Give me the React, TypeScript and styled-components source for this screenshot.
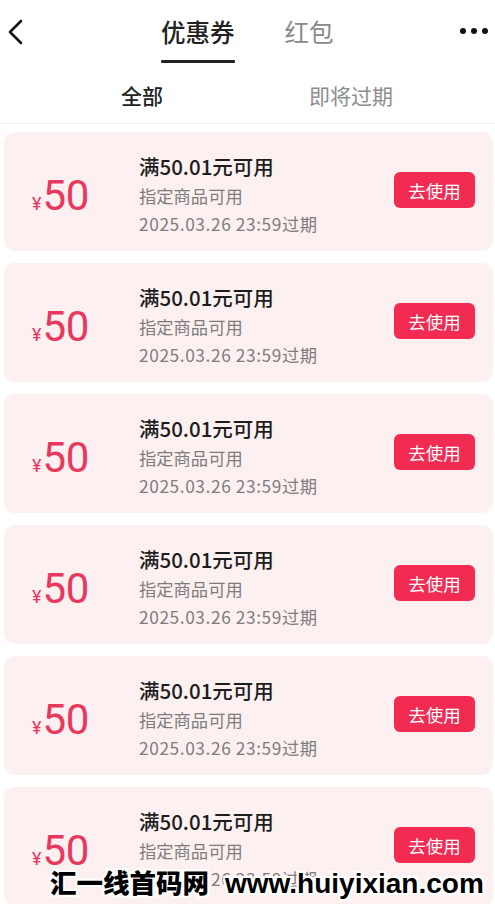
import React from "react";
import styled, { createGlobalStyle } from "styled-components";

const Global = createGlobalStyle`
  html, body { margin: 0; padding: 0; background: #fff; overflow: hidden; }
  body { font-family: "Noto Sans CJK SC", "Noto Sans", sans-serif; }
  * { box-sizing: border-box; }
`;

const Page = styled.div`
  position: relative;
  width: 495px;
  height: 904px;
  overflow: hidden;
  background: #fff;
`;

const TopBar = styled.div`
  height: 64px;
  display: grid;
  grid-template-columns: 60px 1fr 60px;
  align-items: center;
`;

const Back = styled.div`
  display: flex;
  align-items: center;
  padding-left: 6px;
  height: 100%;
  padding-bottom: 0px;
`;

const Tabs = styled.div`
  display: flex;
  justify-content: flex-start;
  padding-left: 101px;
  gap: 50px;
  height: 100%;
`;

const Tab = styled.div<{ $active?: boolean }>`
  position: relative;
  display: flex;
  align-items: center;
  height: 100%;
  padding-bottom: 1px;
  font-size: 24.5px;
  font-weight: ${(p) => (p.$active ? 500 : 400)};
  color: ${(p) => (p.$active ? "#222" : "#8a8a8a")};
  &::after {
    content: "";
    display: ${(p) => (p.$active ? "block" : "none")};
    position: absolute;
    left: 0;
    right: 0;
    bottom: 1px;
    height: 3px;
    border-radius: 1px;
    background: #222;
  }
`;

const More = styled.div`
  display: flex;
  justify-content: flex-end;
  align-items: center;
  gap: 5px;
  padding-right: 7px;
  padding-bottom: 2px;
`;

const Dot = styled.span`
  width: 6px;
  height: 6px;
  border-radius: 50%;
  background: #111;
`;

const SubTabs = styled.div`
  height: 60px;
  display: flex;
  align-items: center;
  padding-left: 121px;
  gap: 146px;
  border-bottom: 1px solid #f0f0f0;
`;

const SubTab = styled.div<{ $active?: boolean }>`
  font-size: 21px;
  padding-top: 2px;
  color: ${(p) => (p.$active ? "#222" : "#8d8d8d")};
  font-weight: ${(p) => (p.$active ? 500 : 400)};
`;

const List = styled.div`
  display: flex;
  flex-direction: column;
  gap: 12px;
  padding: 8px 2px 0 4px;
`;

const Card = styled.div`
  height: 119px;
  border-radius: 11px;
  background: #fdf0f0;
  display: flex;
  align-items: center;
  padding: 0 18px 0 28px;
`;

const Price = styled.div`
  width: 107px;
  display: flex;
  align-items: baseline;
  color: #e8385e;
  font-family: Roboto, "Noto Sans", sans-serif;
  padding-top: 8px;
`;

const Yen = styled.span`
  font-size: 18px;
  margin-right: 1px;
`;

const Amount = styled.span`
  font-size: 42px;
  line-height: 1;
  letter-spacing: -0.3px;
`;

const Info = styled.div`
  flex: 1;
  display: flex;
  flex-direction: column;
  padding-top: 6px;
`;

const Title = styled.div`
  font-size: 20.5px;
  font-weight: 500;
  color: #1d1d1d;
  line-height: 31px;
`;

const Sub = styled.div<{ $wide?: boolean }>`
  font-size: 17.3px;
  color: #7d7d7d;
  line-height: 28px;
  letter-spacing: ${(p) => (p.$wide ? "0.6px" : "0")};
`;

const UseBtn = styled.button`
  width: 81px;
  height: 36px;
  border: none;
  border-radius: 6px;
  background: #f12b52;
  color: #fff;
  font-family: inherit;
  font-size: 17.5px;
  padding: 0;
  margin-bottom: 3px;
`;

const Watermark = styled.div`
  position: absolute;
  left: 50px;
  bottom: 3px;
  display: flex;
  align-items: baseline;
  gap: 16px;
  color: #000;
  white-space: nowrap;
  text-shadow:
    2px 0 0 #fff, -2px 0 0 #fff, 0 2px 0 #fff, 0 -2px 0 #fff,
    2px 2px 0 #fff, -2px -2px 0 #fff, 2px -2px 0 #fff, -2px 2px 0 #fff;
`;

const MarkCn = styled.span`
  font-size: 26.5px;
  font-weight: 900;
`;

const MarkEn = styled.span`
  font-family: "Liberation Sans", Arial, sans-serif;
  font-size: 28px;
  font-weight: 700;
`;

const coupons = Array.from({ length: 6 }, (_, i) => i);

export default function App() {
  return (
    <Page>
      <Global />
      <TopBar>
        <Back>
          <svg width="20" height="26" viewBox="0 0 20 26" fill="none">
            <path d="M15 2 L4 13 L15 24" stroke="#111" strokeWidth="2.6" strokeLinecap="round" strokeLinejoin="round" />
          </svg>
        </Back>
        <Tabs>
          <Tab $active>优惠券</Tab>
          <Tab>红包</Tab>
        </Tabs>
        <More>
          <Dot />
          <Dot />
          <Dot />
        </More>
      </TopBar>
      <SubTabs>
        <SubTab $active>全部</SubTab>
        <SubTab>即将过期</SubTab>
      </SubTabs>
      <List>
        {coupons.map((i) => (
          <Card key={i}>
            <Price>
              <Yen>¥</Yen>
              <Amount>50</Amount>
            </Price>
            <Info>
              <Title>满50.01元可用</Title>
              <Sub>指定商品可用</Sub>
              <Sub $wide>2025.03.26 23:59过期</Sub>
            </Info>
            <UseBtn>去使用</UseBtn>
          </Card>
        ))}
      </List>
      <Watermark>
        <MarkCn>汇一线首码网</MarkCn>
        <MarkEn>www.huiyixian.com</MarkEn>
      </Watermark>
    </Page>
  );
}
